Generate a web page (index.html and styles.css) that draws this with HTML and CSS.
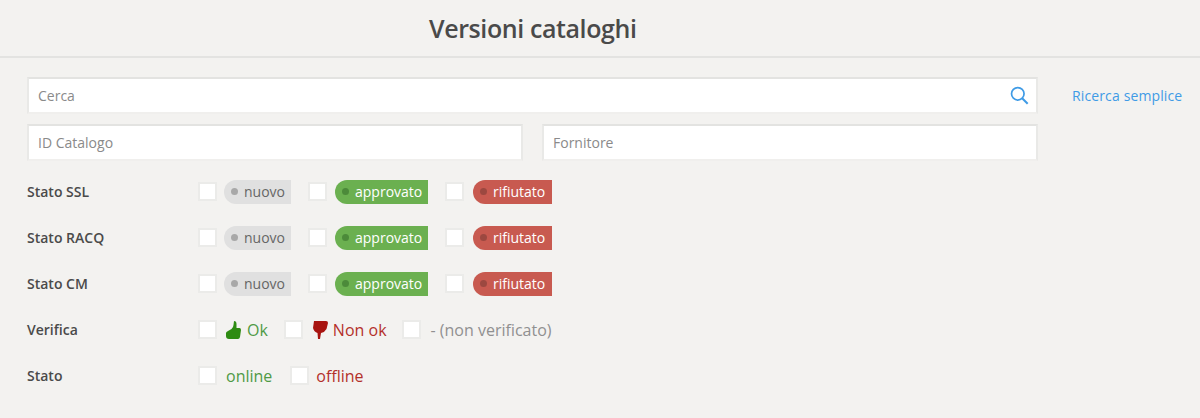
FILE: index.html
```html
<!DOCTYPE html>
<html lang="it">
<head>
<meta charset="utf-8">
<title>Versioni cataloghi</title>
<link rel="stylesheet" href="styles.css">
</head>
<body>
<header class="page-header"><h1>Versioni cataloghi</h1></header>
<main class="filters">
  <div class="search-row">
    <div class="field field-full">
      <span class="placeholder">Cerca</span>
      <svg class="search-icon" viewBox="0 0 20 20" width="19" height="19"><circle cx="8.2" cy="8.2" r="6.6" fill="none" stroke="#3f9be6" stroke-width="1.8"/><path d="M12.8 12.8l5.8 5.800" stroke="#3f9be6" stroke-width="2.2" fill="none"/></svg>
    </div>
    <a class="simple-link">Ricerca semplice</a>
  </div>
  <div class="split-row">
    <div class="field"><span class="placeholder">ID Catalogo</span></div>
    <div class="field"><span class="placeholder">Fornitore</span></div>
  </div>
  <div class="state-row first">
    <span class="row-label">Stato SSL</span>
    <span class="box"></span><span class="pill pill-new"><i class="dot"></i>nuovo</span>
    <span class="box"></span><span class="pill pill-ok"><i class="dot"></i>approvato</span>
    <span class="box"></span><span class="pill pill-ko"><i class="dot"></i>rifiutato</span>
  </div>
  <div class="state-row">
    <span class="row-label">Stato RACQ</span>
    <span class="box"></span><span class="pill pill-new"><i class="dot"></i>nuovo</span>
    <span class="box"></span><span class="pill pill-ok"><i class="dot"></i>approvato</span>
    <span class="box"></span><span class="pill pill-ko"><i class="dot"></i>rifiutato</span>
  </div>
  <div class="state-row">
    <span class="row-label">Stato CM</span>
    <span class="box"></span><span class="pill pill-new"><i class="dot"></i>nuovo</span>
    <span class="box"></span><span class="pill pill-ok"><i class="dot"></i>approvato</span>
    <span class="box"></span><span class="pill pill-ko"><i class="dot"></i>rifiutato</span>
  </div>
  <div class="state-row">
    <span class="row-label">Verifica</span>
    <span class="box"></span>
    <span class="opt opt-up green"><svg class="thumb" viewBox="0 0 15 18" width="15" height="18"><path fill="#2e8b12" d="M8 0Q10.500 0 10.500 3V7H13.500Q15 7 15 9L14 16Q13.500 18 12 18H3Q0 18 0 15V12Q0 11 2 10L5.500 8Q7.500 6 7.500 4z"/></svg>Ok</span>
    <span class="box"></span>
    <span class="opt opt-down red"><svg class="thumb" viewBox="0 0 15 18" width="15" height="18"><path fill="#a81410" d="M1 0H13Q15 0 15 2L13.500 8Q12 11 8 12L7 18H5L4.500 12Q1 11 0 7z"/></svg>Non ok</span>
    <span class="box"></span>
    <span class="opt muted">- (non verificato)</span>
  </div>
  <div class="state-row">
    <span class="row-label">Stato</span>
    <span class="box"></span><span class="opt opt-online green">online</span>
    <span class="box"></span><span class="opt opt-offline red">offline</span>
  </div>
</main>
</body>
</html>
```
FILE: styles.css
```css
* { box-sizing: border-box; }
html, body { margin: 0; height: 100%; }
body {
  background: #f3f2f0;
  font-family: "Open Sans", "Noto Sans", sans-serif;
  font-size: 14px;
  color: #444;
  overflow: hidden;
}
.page-header {
  height: 58px;
  border-bottom: 2px solid #e3e3e1;
  padding-left: 429px;
}
.page-header h1 {
  margin: 0;
  font-size: 25px;
  font-weight: 600;
  line-height: 56px;
  color: #4a4a4a;
  letter-spacing: -0.4px;
}
.filters { padding: 19px 0 0 27px; }
.search-row { display: flex; align-items: center; }
.field {
  height: 37px;
  background: #fff;
  border: 2px solid #f0efed;
  border-top-color: #e3e3e1;
  border-left-color: #e9e9e7;
  border-right-color: #e9e9e7;
  display: flex;
  align-items: center;
  justify-content: space-between;
  padding: 0 7px 0 9px;
}
.field-full { width: 1011px; flex: none; }
.placeholder { color: #8a8a8a; font-size: 14px; }
.search-icon { display: block; }
.simple-link {
  margin-left: 34px;
  color: #3f9be6;
  font-size: 14px;
  letter-spacing: 0.13px;
  white-space: nowrap;
}
.split-row {
  margin-top: 10px;
  width: 1011px;
  display: grid;
  grid-template-columns: 496px 496px;
  column-gap: 19px;
}
.state-row {
  display: flex;
  align-items: center;
  height: 24px;
  margin-top: 22px;
}
.state-row.first { margin-top: 19px; }
.row-label {
  width: 171px;
  flex: none;
  font-weight: 600;
  font-size: 14px;
  color: #4a4a4a;
  margin-bottom: 2px;
}
.box {
  width: 19px;
  height: 19px;
  flex: none;
  background: #fff;
  border: 2px solid #ebebe9;
  margin-bottom: 2px;
}
.pill {
  display: flex;
  align-items: center;
  height: 24px;
  margin-right: 17px;
  border-radius: 12px 0 0 12px;
  padding: 0 0 2px 7px;
  font-size: 14px;
}
.dot {
  width: 7px;
  height: 7px;
  border-radius: 50%;
  margin-right: 6px;
  flex: none;
}
.pill-new { margin-left: 7px; width: 67px; background: #e0e0e0; color: #666; }
.pill-new .dot { background: #a8a8a8; }
.pill-ok { margin-left: 8px; width: 93px; background: #6bb050; color: #fff; }
.pill-ok .dot { background: #4c8a3a; }
.pill-ko { margin-left: 9px; width: 79px; background: #c85a50; color: #fff; margin-right: 0; }
.pill-ko .dot { background: #9c4840; }
.opt {
  margin: 0 15px 0 10px;
  font-size: 16px;
  display: flex;
  align-items: center;
}
.opt-up { margin: 0 16px 0 9px; }
.opt-online { margin: 0 18px 0 9px; }
.opt-offline { margin-left: 7px; }
.thumb { margin-right: 6px; flex: none; }
.opt-down .thumb { margin-right: 5px; }
.green { color: #4f9a45; }
.red { color: #b3302a; }
.muted { color: #909090; }
```
